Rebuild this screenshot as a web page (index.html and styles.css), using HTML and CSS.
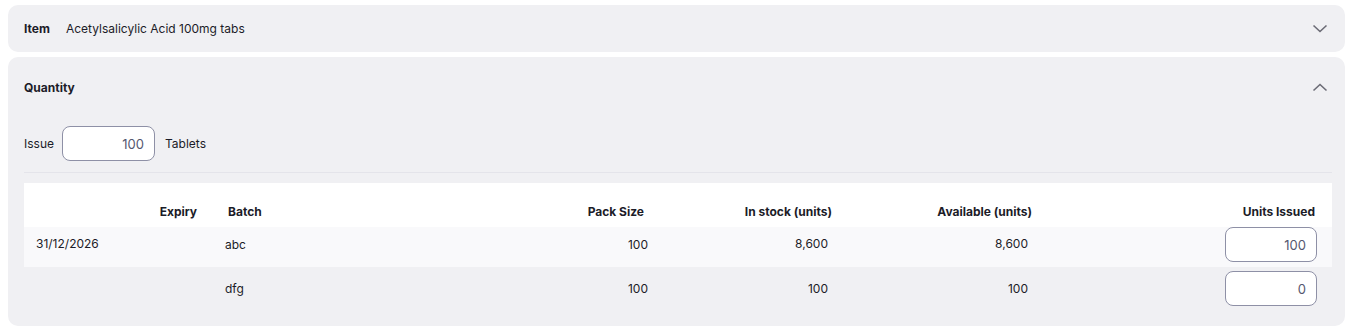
FILE: index.html
```html
<!DOCTYPE html>
<html lang="en">
<head>
    <meta charset="UTF-8">
    <meta name="viewport" content="width=device-width, initial-scale=1.0">
    <title>Issue stock</title>
    <link rel="stylesheet" href="styles.css">
</head>
<body>
    <div class="panel">
        <div class="panel-header item-header">
            <div class="panel-title">
                <span class="label">Item</span>
                <span class="value">Acetylsalicylic Acid 100mg tabs</span>
            </div>
            <svg class="chevron" width="16" height="10" viewBox="0 0 16 10">
                <path d="M1.5 1.5 L8 7.5 L14.5 1.5" />
            </svg>
        </div>
    </div>

    <div class="panel">
        <div class="panel-header quantity-header">
            <div class="panel-title">
                <span class="label">Quantity</span>
            </div>
            <svg class="chevron" width="16" height="10" viewBox="0 0 16 10">
                <path d="M1.5 8.5 L8 2.5 L14.5 8.5" />
            </svg>
        </div>

        <div class="panel-body">
            <div class="issue-row">
                <span>Issue</span>
                <input class="num-input issue-input" type="text" value="100">
                <span class="unit">Tablets</span>
            </div>

            <div class="divider"></div>

            <table class="batches">
                <colgroup>
                    <col style="width: 188px">
                    <col style="width: 248px">
                    <col style="width: 200px">
                    <col style="width: 185px">
                    <col style="width: 200px">
                    <col>
                </colgroup>
                <thead>
                    <tr>
                        <th class="right expiry-head">Expiry</th>
                        <th class="batch-head">Batch</th>
                        <th class="right pack-head">Pack Size</th>
                        <th class="right">In stock (units)</th>
                        <th class="right">Available (units)</th>
                        <th class="right issued-head">Units Issued</th>
                    </tr>
                </thead>
                <tbody>
                    <tr class="odd">
                        <td class="expiry">31/12/2026</td>
                        <td class="batch">abc</td>
                        <td class="right pack">100</td>
                        <td class="right stock">8,600</td>
                        <td class="right stock">8,600</td>
                        <td class="right issued"><input class="num-input row-input" type="text" value="100"></td>
                    </tr>
                    <tr class="even">
                        <td class="expiry"></td>
                        <td class="batch">dfg</td>
                        <td class="right pack">100</td>
                        <td class="right stock">100</td>
                        <td class="right stock">100</td>
                        <td class="right issued"><input class="num-input row-input" type="text" value="0"></td>
                    </tr>
                </tbody>
            </table>
        </div>
    </div>
</body>
</html>
```

FILE: styles.css
```css
* {
    margin: 0;
    padding: 0;
    box-sizing: border-box;
    font-family: Inter, 'Noto Sans', sans-serif;
}

body {
    background: #ffffff;
    color: #1c1c28;
    font-size: 12px;
    padding: 5px 3px 0 8px;
}

.panel {
    background: #f0f0f3;
    border-radius: 10px;
    margin-bottom: 5px;
}

.panel-header {
    display: flex;
    align-items: center;
    justify-content: space-between;
    padding: 0 17px 0 16px;
}

.item-header {
    height: 47px;
}

.quantity-header {
    height: 60px;
}

.panel-title {
    display: flex;
    align-items: center;
    gap: 16px;
}

.label {
    font-weight: 700;
}

.chevron path {
    fill: none;
    stroke: #6b6b75;
    stroke-width: 1.6;
}

.panel-body {
    padding: 9px 13px 19px 16px;
}

.issue-row {
    display: flex;
    align-items: center;
    height: 35px;
}

.num-input {
    border: 1px solid #8e90a6;
    border-radius: 8px;
    background: #ffffff;
    height: 35px;
    text-align: right;
    font-size: 13px;
    color: #555770;
    padding: 0 10px;
    outline: none;
}

.issue-input {
    width: 93px;
    margin-left: 8px;
}

.unit {
    margin-left: 10px;
}

.divider {
    height: 1px;
    background: #e4e4ea;
    margin: 11px 0 10px;
}

.batches {
    width: 100%;
    border-collapse: collapse;
    table-layout: fixed;
}

.batches th {
    background: #ffffff;
    font-weight: 700;
    text-align: left;
    height: 44px;
    padding: 12px 13px 0 16px;
}

.batches th.right,
.batches td.right {
    text-align: right;
}

.batches th.expiry-head {
    padding-right: 15px;
}

.batches th.pack-head {
    padding-right: 16px;
}

.batches th.issued-head {
    padding-right: 17px;
}

.batches td {
    height: 40px;
    padding: 0 17px 0 12px;
}

.batches tr.odd td {
    background: #f9f9fb;
    padding-bottom: 5px;
}

.batches tr.even td {
    padding-top: 3px;
}

.batches tr.odd td.expiry,
.batches tr.odd td.stock {
    padding-bottom: 8px;
}

.batches td.batch {
    padding-left: 13px;
}

.batches td.pack {
    padding-right: 12px;
}

.batches td.issued {
    padding-right: 15px;
}

.row-input {
    width: 92px;
}
```
